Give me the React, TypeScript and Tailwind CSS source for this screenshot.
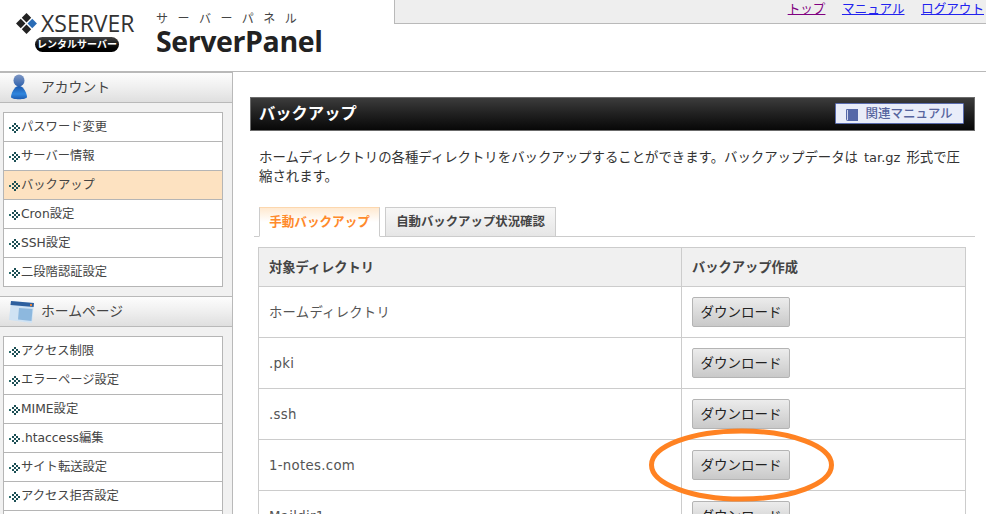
const jp = '"DejaVu Sans","Noto Sans CJK JP",sans-serif';

function Bullet() {
  return (
    <svg width="13" height="11" viewBox="0 0 13 11" className="shrink-0" shapeRendering="crispEdges">
      <rect x="1" y="5" width="2" height="2" fill="#2a6a6a" />
      <g fill="#1c4f55">
        <rect x="6" y="1" width="2" height="2" />
        <rect x="8" y="3" width="2" height="2" />
        <rect x="10" y="5" width="2" height="2" />
        <rect x="8" y="7" width="2" height="2" />
        <rect x="6" y="9" width="2" height="2" />
        <rect x="4" y="3" width="2" height="2" />
        <rect x="4" y="7" width="2" height="2" />
        <rect x="6" y="5" width="2" height="2" />
      </g>
    </svg>
  );
}

function MenuRow({ label, active }: { label: string; active?: boolean }) {
  return (
    <div className={`h-[29px] flex items-center pl-[4px] border-b border-[#b5b5b5] text-[12.3px] text-[#444] ${active ? 'bg-[#fde2c1]' : 'bg-white'}`}>
      <Bullet />
      <span className="leading-none">{label}</span>
    </div>
  );
}

function SectionHead({ icon, label }: { icon: React.ReactNode; label: string }) {
  return (
    <div className="h-[31px] flex items-center border-y border-[#b9b9b9] bg-gradient-to-b from-[#fdfdfd] via-[#efefef] to-[#dfdfdf] pl-[9px]">
      <div className="w-[32px] flex justify-start">{icon}</div>
      <span className="text-[13.8px] text-[#444] leading-none">{label}</span>
    </div>
  );
}

function Row({ name }: { name: string }) {
  return (
    <div className="h-[51px] flex border-b border-[#cccccc] shrink-0">
      <div className="w-[423px] border-r border-[#cccccc] flex items-center pl-[10px] pt-[1px] text-[13.3px] text-[#555] tracking-[0.3px]">{name}</div>
      <div className="flex-1 pl-[10px] pt-[10px]">
        <div className="w-[98px] h-[30px] flex items-center justify-center rounded-[2px] border border-[#b4b4b4] bg-gradient-to-b from-[#ececec] to-[#c9c9c9] text-[13.5px] text-[#222]">ダウンロード</div>
      </div>
    </div>
  );
}

export default function App() {
  return (
    <div className="w-[986px] h-[514px] overflow-hidden bg-white relative" style={{ fontFamily: jp }}>
      {/* header */}
      <header className="h-[72px] flex border-b border-[#b9b9b9]">
        <div className="w-[394px] shrink-0 pl-[15px] pt-[12px] flex">
          <div className="w-[122px] shrink-0">
            <div className="flex items-center">
              <svg width="23" height="23" viewBox="0 0 22 22" className="shrink-0">
                <path d="M11 1 L15.5 5.5 L11 10 L6.5 5.5 Z" fill="#222" />
                <path d="M5.5 6.5 L10 11 L5.5 15.5 L1 11 Z" fill="#222" />
                <path d="M16.5 6.5 L21 11 L16.5 15.5 L12 11 Z" fill="#2a6cb5" />
                <path d="M11 12 L15.5 16.5 L11 21 L6.5 16.5 Z" fill="#222" />
              </svg>
              <span className="ml-[3px] text-[23px] leading-none text-[#333]" style={{ fontFamily: '"Open Sans",sans-serif' }}>XSERVER</span>
            </div>
            <div className="ml-[20px] mt-[2px] w-[84px] h-[15px] rounded-full bg-gradient-to-b from-[#444] to-[#000] text-white text-[10px] font-bold leading-[15px] text-center">レンタルサーバー</div>
          </div>
          <div className="ml-[19px]">
            <div className="text-[12px] text-[#444] tracking-[9.5px] leading-[15px] whitespace-nowrap">サーバーパネル</div>
            <div className="text-[28.5px] font-bold text-[#222] leading-[28px] tracking-[-0.4px]" style={{ fontFamily: '"Open Sans",sans-serif' }}>ServerPanel</div>
          </div>
        </div>
        <div className="flex-1 h-[24px] bg-[#eeeeee] border-l border-b border-[#b9b9b9] flex justify-end items-start gap-[16.5px] pr-[2px] text-[12.6px] leading-[17px]">
          <a className="underline text-[#800080]">トップ</a>
          <a className="underline text-[#2222ee]">マニュアル</a>
          <a className="underline text-[#2222ee]">ログアウト</a>
        </div>
      </header>

      <div className="flex h-[442px]">
        {/* sidebar */}
        <aside className="w-[233px] shrink-0 bg-[#f1f1f1] border-r border-[#b9b9b9]">
          <SectionHead
            label="アカウント"
            icon={
              <svg width="20" height="26" viewBox="0 0 20 26" className="-mt-[1px]">
                <defs>
                  <linearGradient id="uh" x1="0" y1="0" x2="0" y2="1">
                    <stop offset="0" stopColor="#7f97c4" />
                    <stop offset="1" stopColor="#2f62ad" />
                  </linearGradient>
                  <linearGradient id="ub" x1="0" y1="0" x2="0" y2="1">
                    <stop offset="0" stopColor="#1b57ac" />
                    <stop offset="0.6" stopColor="#2f86de" />
                    <stop offset="1" stopColor="#1d5bb0" />
                  </linearGradient>
                </defs>
                <ellipse cx="10" cy="6.5" rx="5.5" ry="6" fill="url(#uh)" />
                <path d="M10 12 C5 12 2 20 2 23 C2 26 18 26 18 23 C18 20 15 12 10 12 Z" fill="url(#ub)" />
              </svg>
            }
          />
          <div className="ml-[3px] mr-[9px] mt-[9px] border-x border-t border-[#b5b5b5]">
            <MenuRow label="パスワード変更" />
            <MenuRow label="サーバー情報" />
            <MenuRow label="バックアップ" active />
            <MenuRow label="Cron設定" />
            <MenuRow label="SSH設定" />
            <MenuRow label="二段階認証設定" />
          </div>
          <div className="h-[9px]" />
          <SectionHead
            label="ホームページ"
            icon={
              <svg width="26" height="24" viewBox="0 0 26 24">
                <path d="M2 1 L25 3 L23 23 L0 20 Z" fill="#cfe2f3" />
                <path d="M2 1 L25 3 L24.6 7 L1.5 5 Z" fill="#2d5f9e" />
                <path d="M10 8 L23.5 9 L22.5 21 L9 19.5 Z" fill="#8db8de" />
                <rect x="21" y="4" width="2" height="2" fill="#e8863a" />
              </svg>
            }
          />
          <div className="ml-[3px] mr-[9px] mt-[9px] border-x border-t border-[#b5b5b5]">
            <MenuRow label="アクセス制限" />
            <MenuRow label="エラーページ設定" />
            <MenuRow label="MIME設定" />
            <MenuRow label=".htaccess編集" />
            <MenuRow label="サイト転送設定" />
            <MenuRow label="アクセス拒否設定" />
            <MenuRow label="CGIツール" />
          </div>
        </aside>

        {/* main */}
        <main className="flex-1 pl-[17px] pt-[25px] pr-[11px] min-w-0">
          <div className="h-[34px] flex items-center justify-between border border-[#6b6b6b] bg-gradient-to-b from-[#3c3c3c] to-[#080808] pl-[8px] pr-[10px]">
            <h1 className="text-[16.3px] font-bold text-white leading-none">バックアップ</h1>
            <div className="w-[129px] h-[21px] -mt-[1px] pt-[1px] flex items-center justify-center gap-[7px] rounded-[1px] border border-[#5a6cae] bg-[#e9edf9] text-[12.5px] font-medium text-[#56649e]">
              <svg width="12" height="13" viewBox="0 0 12 13">
                <path d="M1 1 H12 V13 H2 Q0 13 0 11 V2 Q0 1 1 1 Z" fill="#5568a8" />
                <rect x="1" y="2" width="1" height="10" fill="#cfd6ee" />
              </svg>
              関連マニュアル
            </div>
          </div>
          <div className="mt-[17px] ml-[9px] mr-[5px] h-[38px] text-[13.4px] leading-[19px] text-[#333]">
            ホームディレクトリの各種ディレクトリをバックアップすることができます。バックアップデータは<span className="text-[13px] leading-none px-[6px]">tar.gz</span>形式で圧縮されます。
          </div>
          <div className="mt-[21px] ml-[4px] h-[30px] flex items-end gap-[5px] border-b border-[#cccccc] pl-[5px]">
            <div className="w-[121px] h-[30px] -mb-px flex items-center justify-center border border-[#cccccc] border-t-[#fcd7ae] border-b-white bg-gradient-to-b from-[#ffe9d0] via-white to-white text-[12.6px] font-bold text-[#ff8a2b]">手動バックアップ</div>
            <div className="w-[171px] h-[30px] -mb-px flex items-center justify-center border border-[#cccccc] bg-gradient-to-b from-[#f7f7f7] to-[#e6e6e6] text-[12.4px] font-bold text-[#444]">自動バックアップ状況確認</div>
          </div>
          <div className="mt-[10px] ml-[8px] w-[708px] border-x border-t border-[#cccccc] flex flex-col">
            <div className="h-[39px] flex border-b border-[#cccccc] bg-[#f0f0f0] text-[13.25px] font-bold text-[#444]">
              <div className="w-[423px] border-r border-[#cccccc] flex items-center pl-[10px] pt-[1px]">対象ディレクトリ</div>
              <div className="flex-1 flex items-center pl-[10px] pt-[1px]">バックアップ作成</div>
            </div>
            <Row name="ホームディレクトリ" />
            <Row name=".pki" />
            <Row name=".ssh" />
            <Row name="1-notes.com" />
            <Row name="Maildir1" />
          </div>
        </main>
      </div>

      {/* hand-drawn annotation */}
      <svg className="absolute left-[645px] top-[425px] pointer-events-none" width="195" height="80" viewBox="0 0 195 80">
        <ellipse cx="96.5" cy="40" rx="90" ry="34" fill="none" stroke="#ff8222" strokeWidth="5" />
      </svg>
    </div>
  );
}
